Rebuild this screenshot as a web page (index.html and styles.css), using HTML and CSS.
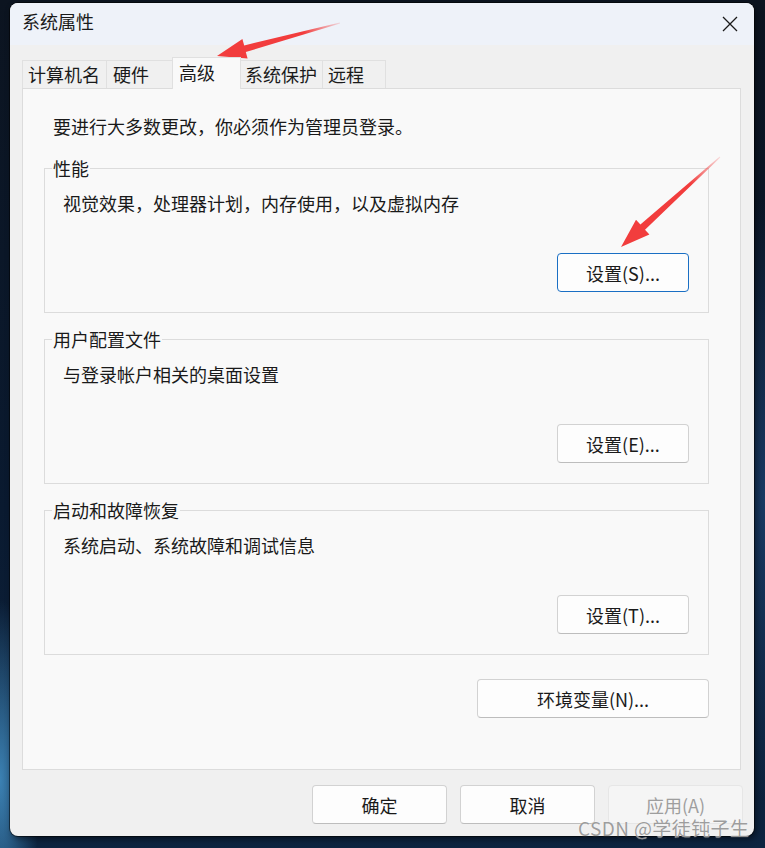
FILE: index.html
```html
<!DOCTYPE html>
<html>
  <head>
    <meta charset="utf-8">
    <link rel="stylesheet" href="styles.css">
  </head>
  <body>
    <div class="window">
      <div class="titlebar">
        <span class="title">系统属性</span>
        <svg class="close" width="16" height="16" viewBox="0 0 16 16">
          <path d="M1 1 L15 15 M15 1 L1 15" stroke="#1a1a1a" stroke-width="1.3" fill="none"/>
        </svg>
      </div>
      <div class="content">
        <div class="tabs">
          <div class="tab">计算机名</div>
          <div class="tab">硬件</div>
          <div class="tab active">高级</div>
          <div class="tab">系统保护</div>
          <div class="tab">远程</div>
        </div>
        <div class="panel">
          <p class="notice">要进行大多数更改，你必须作为管理员登录。</p>
          <div class="group">
            <span class="group-title">性能</span>
            <p class="desc">视觉效果，处理器计划，内存使用，以及虚拟内存</p>
            <button class="btn focused">设置(S)...</button>
          </div>
          <div class="group">
            <span class="group-title">用户配置文件</span>
            <p class="desc">与登录帐户相关的桌面设置</p>
            <button class="btn">设置(E)...</button>
          </div>
          <div class="group">
            <span class="group-title">启动和故障恢复</span>
            <p class="desc">系统启动、系统故障和调试信息</p>
            <button class="btn">设置(T)...</button>
          </div>
          <div class="env-row">
            <button class="btn env">环境变量(N)...</button>
          </div>
        </div>
        <div class="footer">
          <button class="btn">确定</button>
          <button class="btn">取消</button>
          <button class="btn" disabled>应用(A)</button>
        </div>
      </div>
    </div>

    <span class="watermark">CSDN @学徒钝子生</span>

    <!-- annotation arrows drawn over the screenshot -->
    <svg class="arrows" width="765" height="848" viewBox="0 0 765 848">
      <defs>
        <linearGradient id="fade1" gradientUnits="userSpaceOnUse" x1="340" y1="23" x2="218" y2="56">
          <stop offset="0" stop-color="#f23d3d" stop-opacity="0.15"/>
          <stop offset="0.3" stop-color="#f23d3d"/>
          <stop offset="1" stop-color="#f23d3d"/>
        </linearGradient>
        <linearGradient id="fade2" gradientUnits="userSpaceOnUse" x1="720" y1="157" x2="622" y2="246">
          <stop offset="0" stop-color="#f23d3d" stop-opacity="0.15"/>
          <stop offset="0.3" stop-color="#f23d3d"/>
          <stop offset="1" stop-color="#f23d3d"/>
        </linearGradient>
      </defs>
      <polygon fill="url(#fade1)" points="340.1,23.6 245.8,52 247.6,58.4 217,56 242.4,39 244.2,45.4 339.9,22.4"/>
      <polygon fill="url(#fade2)" points="720.3,157.4 645,229.8 649.4,234.6 621,247 636,219.8 640.4,224.6 719.7,156.6"/>
    </svg>
  </body>
</html>
```

FILE: styles.css
```css
* {
  box-sizing: border-box;
  margin: 0;
  padding: 0;
}

body {
  width: 765px;
  height: 848px;
  overflow: hidden;
  position: relative;
  font-family: "Noto Sans CJK SC", "Noto Sans", sans-serif;
  font-size: 18px;
  color: #1a1a1a;
  background:
    radial-gradient(ellipse 40px 180px at 0px 780px, rgba(80, 170, 230, 0.7), transparent),
    radial-gradient(ellipse 60px 300px at 765px 500px, rgba(40, 90, 150, 0.5), transparent),
    linear-gradient(180deg, #0c1420 0%, #0a1a30 60%, #0d2440 100%);
}

.window {
  position: relative;
  width: 744px;
  height: 833px;
  margin: 3px 0 0 10px;
  border-radius: 8px;
  overflow: hidden;
  background: #f0f0f0;
  box-shadow: 0 0 0 1px rgba(0, 0, 0, 0.5), 2px 3px 6px rgba(0, 0, 0, 0.5);
}

.titlebar {
  height: 42px;
  padding: 6px 0 0 12px;
  background: #eef2f9;
  display: flex;
  align-items: flex-start;
  justify-content: space-between;
}

.title {
  line-height: 24px;
}

.close {
  margin: 7px 16px 0 0;
}

.content {
  padding: 12px 13px 0 12px;
}

.tabs {
  display: flex;
  align-items: flex-end;
  height: 31px;
}

.tab {
  height: 28px;
  line-height: 26px;
  padding: 0 5px;
  margin-right: -1px;
  border: 1px solid #e0e0e0;
  border-bottom: none;
  background: #f0f0f0;
  white-space: nowrap;
}

.tab:nth-child(1) { width: 85px; }
.tab:nth-child(2) { width: 67px; padding-left: 6px; }
.tab:nth-child(4) { width: 83px; padding-left: 4px; }
.tab:nth-child(5) { width: 64px; padding-left: 5px; }

.tab.active {
  position: relative;
  z-index: 1;
  width: 69px;
  height: 32px;
  margin-bottom: -1px;
  padding-left: 6px;
  line-height: 29px;
  background: #f9f9f9;
}

.panel {
  height: 682px;
  border: 1px solid #dcdcdc;
  background: #f9f9f9;
  padding: 25px 31px 0 21px;
}

.notice {
  line-height: 24px;
  padding-left: 9px;
  margin-bottom: 30px;
}

.group {
  position: relative;
  height: 145px;
  margin-bottom: 26px;
  border: 1px solid #dcdcdc;
  display: flex;
  flex-direction: column;
  padding: 22px 19px 20px 18px;
}

.group-title {
  position: absolute;
  top: -12px;
  left: 7px;
  padding: 0 1px;
  line-height: 22px;
  background: #f9f9f9;
}

.desc {
  line-height: 24px;
}

.btn {
  width: 132px;
  height: 39px;
  font-family: inherit;
  font-size: 18px;
  color: #1a1a1a;
  background: #fdfdfd;
  border: 1px solid #d2d2d2;
  border-bottom-color: #bdbdbd;
  border-radius: 4px;
}

.group .btn {
  margin-top: auto;
  align-self: flex-end;
}

.btn.focused {
  border: 1px solid #1a6fc4;
}

.env-row {
  display: flex;
  justify-content: flex-end;
  margin-top: -2px;
}

.btn.env {
  width: 232px;
}

.footer {
  display: flex;
  justify-content: flex-end;
  gap: 13px;
  margin-right: -2px;
  padding-top: 15px;
}

.footer .btn {
  width: 135px;
}

.footer .btn:disabled {
  background: #f5f5f5;
  border-color: #e6e6e6;
  color: #9e9e9e;
}

.watermark {
  position: absolute;
  left: 578px;
  top: 815px;
  font-size: 19px;
  line-height: 26px;
  letter-spacing: 0.4px;
  white-space: nowrap;
  color: rgba(140, 140, 140, 0.85);
  text-shadow: 0 0 1px rgba(255, 255, 255, 0.8);
}

.arrows {
  position: absolute;
  top: 0;
  left: 0;
}
```
